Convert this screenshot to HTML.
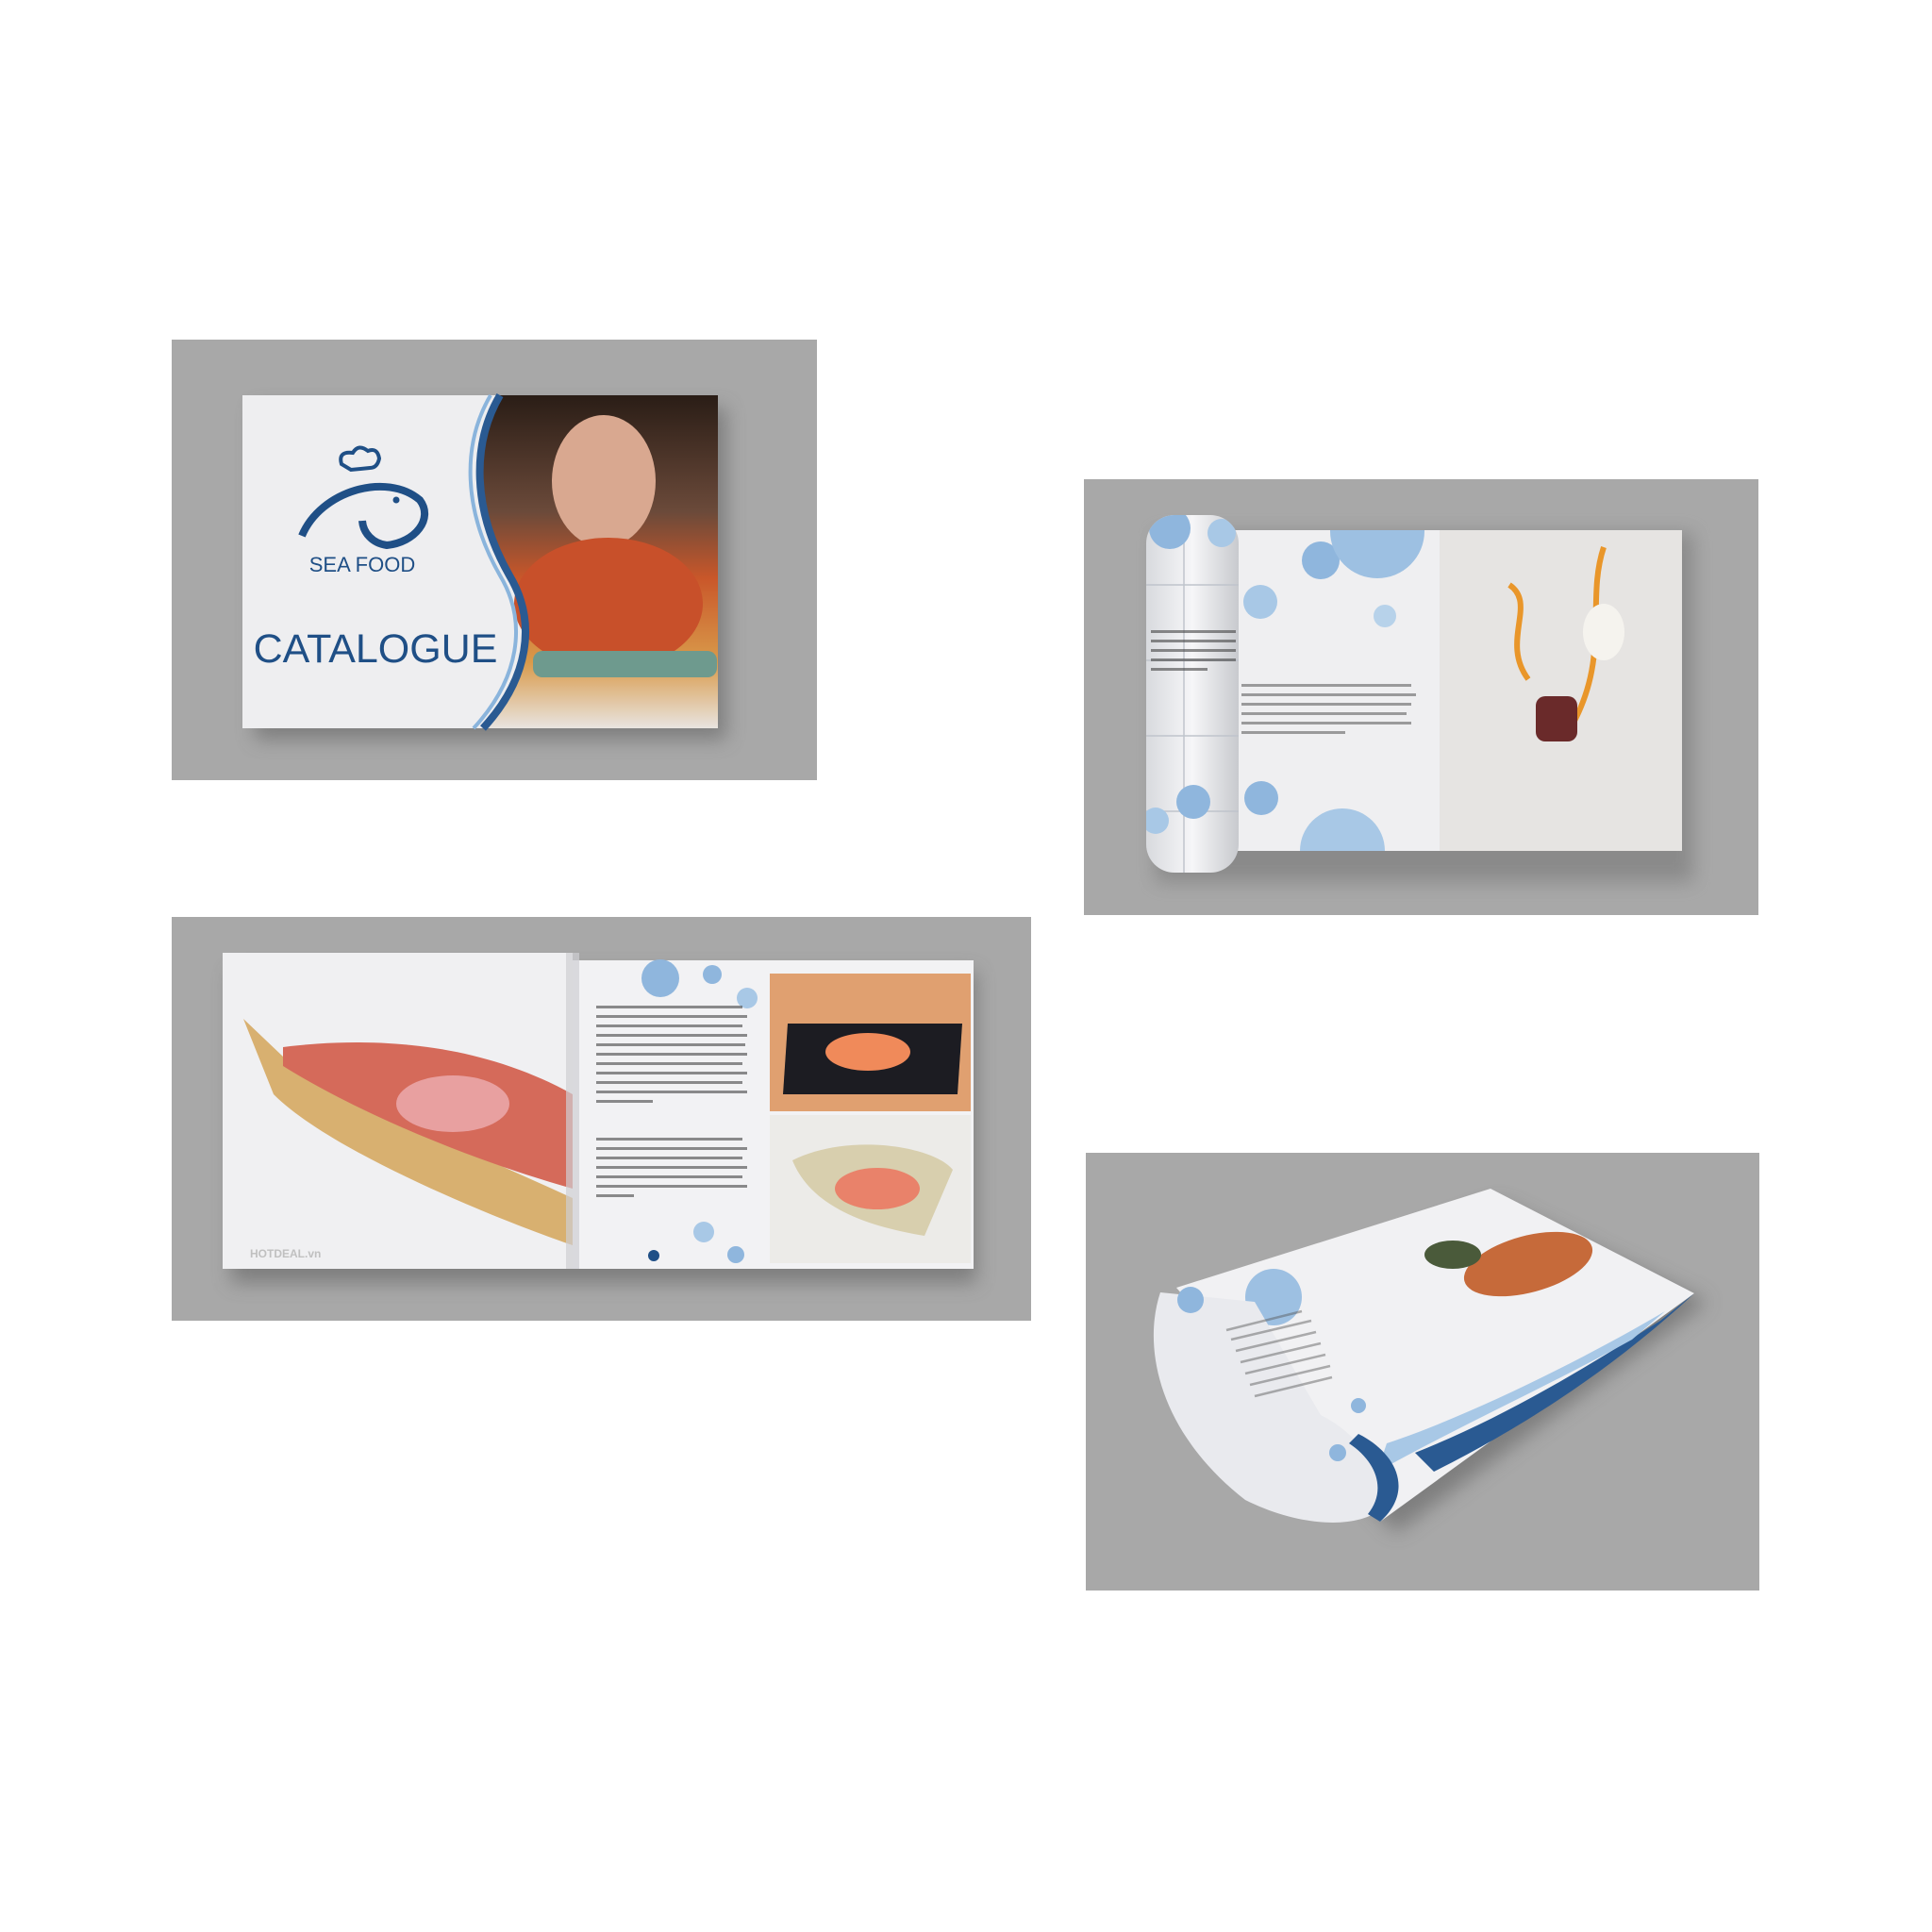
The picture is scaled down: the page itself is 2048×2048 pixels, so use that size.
<!DOCTYPE html>
<html><head><style>
html,body{margin:0;padding:0;background:#fff;}
svg{display:block;font-family:"Liberation Sans",sans-serif;}
</style></head><body>
<svg width="2048" height="2048" viewBox="0 0 2048 2048" xmlns="http://www.w3.org/2000/svg">
<defs>
<filter id="sh" x="-10%" y="-10%" width="130%" height="140%"><feGaussianBlur stdDeviation="10"/></filter>
<linearGradient id="food" x1="0" y1="0" x2="0" y2="1"><stop offset="0" stop-color="#2a1d16"/><stop offset="0.35" stop-color="#6b4a3a"/><stop offset="0.55" stop-color="#c9572a"/><stop offset="0.8" stop-color="#d99a4a"/><stop offset="1" stop-color="#e8e4e0"/></linearGradient>
<linearGradient id="roll" x1="0" y1="0" x2="1" y2="0"><stop offset="0" stop-color="#d8dade"/><stop offset="0.5" stop-color="#f6f6f8"/><stop offset="1" stop-color="#c8cace"/></linearGradient>
<clipPath id="p2"><rect x="1300" y="562" width="226" height="340"/></clipPath>
<clipPath id="p2r"><rect x="1215" y="546" width="98" height="379" rx="30"/></clipPath>
</defs>
<rect width="2048" height="2048" fill="#fff"/>

<!-- Panel 1 -->
<rect x="182" y="360" width="684" height="467" fill="#a8a8a8"/>
<rect x="270" y="432" width="500" height="352" fill="#555" filter="url(#sh)" opacity="0.5"/>
<rect x="257" y="419" width="504" height="353" fill="#eeeef0"/>
<path d="M530 419 L761 419 L761 772 L512 772 C560 720 570 660 540 610 C500 540 500 470 530 419Z" fill="url(#food)"/>
<ellipse cx="640" cy="510" rx="55" ry="70" fill="#d9a890"/>
<ellipse cx="645" cy="640" rx="100" ry="70" fill="#c8502a"/>
<rect x="565" y="690" width="195" height="28" rx="10" fill="#6e9a8e"/>
<path d="M530 419 C500 470 500 540 540 610 C570 660 560 720 512 772" fill="none" stroke="#2a5a92" stroke-width="8"/>
<path d="M520 419 C490 470 490 540 530 610 C560 660 550 720 502 772" fill="none" stroke="#8ab4dc" stroke-width="4"/>
<path d="M362 492 q-4 -14 12 -12 q6 -10 16 -2 q10 -4 12 8 q-2 10 -10 10 l-20 2 z" fill="none" stroke="#1f4f86" stroke-width="4"/>
<path d="M320 568 C340 520 410 500 445 530 C460 550 440 575 410 578 C395 576 385 565 384 552" fill="none" stroke="#1f4f86" stroke-width="8"/>
<circle cx="420" cy="530" r="3.5" fill="#1f4f86"/>
<text x="384" y="606" font-size="22" fill="#1f4f86" text-anchor="middle">SEA FOOD</text>
<text x="398" y="702" font-size="43" fill="#1f4f86" text-anchor="middle">CATALOGUE</text>

<!-- Panel 2 -->
<rect x="1149" y="508" width="715" height="462" fill="#a8a8a8"/>
<rect x="1225" y="565" width="570" height="370" fill="#666" filter="url(#sh)" opacity="0.45"/>
<rect x="1300" y="562" width="483" height="340" fill="#efeff1"/>
<rect x="1526" y="562" width="257" height="340" fill="#e6e4e2"/>
<g clip-path="url(#p2)">
<circle cx="1400" cy="594" r="20" fill="#8fb6dd"/><circle cx="1460" cy="563" r="50" fill="#9dc0e2"/>
<circle cx="1336" cy="638" r="18" fill="#a8c8e6"/><circle cx="1468" cy="653" r="12" fill="#b7d2ea"/>
<circle cx="1337" cy="846" r="18" fill="#8fb6dd"/><circle cx="1423" cy="902" r="45" fill="#a8c8e6"/>
</g>
<g fill="#555" opacity="0.55"><rect x="1316" y="725" width="180" height="3"/><rect x="1316" y="735" width="185" height="3"/><rect x="1316" y="745" width="180" height="3"/><rect x="1316" y="755" width="175" height="3"/><rect x="1316" y="765" width="180" height="3"/><rect x="1316" y="775" width="110" height="3"/></g>
<path d="M1600 620 c30 20 -10 60 20 100 M1700 580 c-20 60 10 120 -40 200" stroke="#e9962a" stroke-width="6" fill="none"/>
<ellipse cx="1700" cy="670" rx="22" ry="30" fill="#f5f3ee"/>
<rect x="1628" y="738" width="44" height="48" rx="10" fill="#6a2a2a"/>
<rect x="1215" y="546" width="98" height="379" rx="30" fill="url(#roll)"/>
<g clip-path="url(#p2r)">
<g stroke="#bfc4cc" stroke-width="1.5"><line x1="1215" y1="620" x2="1313" y2="620"/><line x1="1215" y1="700" x2="1313" y2="700"/><line x1="1215" y1="780" x2="1313" y2="780"/><line x1="1215" y1="860" x2="1313" y2="860"/><line x1="1255" y1="546" x2="1255" y2="925"/></g>
<circle cx="1240" cy="560" r="22" fill="#8fb6dd"/><circle cx="1295" cy="565" r="15" fill="#a8c8e6"/><circle cx="1265" cy="850" r="18" fill="#8fb6dd"/><circle cx="1225" cy="870" r="14" fill="#a8c8e6"/>
</g>
<g fill="#444" opacity="0.6"><rect x="1220" y="668" width="90" height="3"/><rect x="1220" y="678" width="90" height="3"/><rect x="1220" y="688" width="90" height="3"/><rect x="1220" y="698" width="90" height="3"/><rect x="1220" y="708" width="60" height="3"/></g>

<!-- Panel 3 -->
<rect x="182" y="972" width="911" height="428" fill="#a8a8a8"/>
<rect x="245" y="1030" width="790" height="330" fill="#555" filter="url(#sh)" opacity="0.5"/>
<rect x="236" y="1010" width="371" height="335" fill="#f0f0f2"/>
<rect x="607" y="1018" width="425" height="327" fill="#f2f2f4"/>
<path d="M258 1080 L300 1120 C400 1180 520 1230 607 1270 L607 1320 C520 1290 350 1220 290 1160 Z" fill="#d8b070"/>
<path d="M300 1110 C380 1100 500 1100 607 1160 L607 1260 C500 1230 380 1180 300 1130Z" fill="#d56a5a"/>
<ellipse cx="480" cy="1170" rx="60" ry="30" fill="#e8a0a0"/>
<rect x="600" y="1010" width="14" height="335" fill="#cfcfd3" opacity="0.7"/>
<circle cx="700" cy="1037" r="20" fill="#8fb6dd"/><circle cx="755" cy="1033" r="10" fill="#8fb6dd"/><circle cx="792" cy="1058" r="11" fill="#a8c8e6"/>
<circle cx="746" cy="1306" r="11" fill="#a8c8e6"/><circle cx="780" cy="1330" r="9" fill="#8fb6dd"/><circle cx="693" cy="1331" r="6" fill="#1f4f86"/>
<g fill="#444" opacity="0.6">
<rect x="632" y="1066" width="155" height="3"/><rect x="632" y="1076" width="160" height="3"/><rect x="632" y="1086" width="155" height="3"/><rect x="632" y="1096" width="160" height="3"/><rect x="632" y="1106" width="158" height="3"/><rect x="632" y="1116" width="160" height="3"/><rect x="632" y="1126" width="155" height="3"/><rect x="632" y="1136" width="160" height="3"/><rect x="632" y="1146" width="155" height="3"/><rect x="632" y="1156" width="160" height="3"/><rect x="632" y="1166" width="60" height="3"/>
<rect x="632" y="1206" width="155" height="3"/><rect x="632" y="1216" width="160" height="3"/><rect x="632" y="1226" width="155" height="3"/><rect x="632" y="1236" width="160" height="3"/><rect x="632" y="1246" width="155" height="3"/><rect x="632" y="1256" width="160" height="3"/><rect x="632" y="1266" width="40" height="3"/></g>
<rect x="816" y="1032" width="213" height="146" fill="#e0a070"/>
<path d="M835 1085 L1020 1085 L1015 1160 L830 1160Z" fill="#1c1c22"/>
<ellipse cx="920" cy="1115" rx="45" ry="20" fill="#f08a5a"/>
<rect x="816" y="1182" width="213" height="157" fill="#ecebe8"/>
<path d="M840 1230 C900 1200 990 1215 1010 1240 L980 1310 C920 1300 860 1280 840 1230Z" fill="#d8cfae"/>
<ellipse cx="930" cy="1260" rx="45" ry="22" fill="#e9826a"/>
<text x="265" y="1333" font-size="12" fill="#c0c0c0" font-weight="bold">HOTDEAL.vn</text>

<!-- Panel 4 -->
<rect x="1151" y="1222" width="714" height="464" fill="#a8a8a8"/>
<path d="M1260 1395 L1590 1275 L1810 1380 L1480 1625 Z" fill="#555" filter="url(#sh)" opacity="0.5"/>
<path d="M1247 1365 L1580 1260 L1796 1371 L1463 1613 Z" fill="#f1f1f3"/>
<path d="M1520 1560 C1600 1520 1700 1460 1796 1371 L1760 1400 C1680 1450 1600 1500 1500 1540Z" fill="#2a5a92"/>
<path d="M1470 1530 C1560 1500 1680 1440 1765 1390 L1730 1420 C1640 1470 1550 1510 1460 1560Z" fill="#a8c8e6"/>
<circle cx="1350" cy="1375" r="30" fill="#9dc0e2"/>
<ellipse cx="1620" cy="1340" rx="70" ry="30" fill="#c66a3a" transform="rotate(-15 1620 1340)"/>
<ellipse cx="1540" cy="1330" rx="30" ry="15" fill="#4a5a3a"/>
<path d="M1230 1370 C1210 1430 1230 1520 1320 1590 C1380 1620 1440 1620 1463 1600 C1470 1560 1440 1520 1400 1500 L1330 1380 Z" fill="#e9eaee"/>
<path d="M1440 1520 C1480 1540 1500 1580 1463 1613 L1450 1605 C1470 1580 1460 1550 1430 1530Z" fill="#2a5a92"/>
<circle cx="1262" cy="1378" r="14" fill="#8fb6dd"/><circle cx="1440" cy="1490" r="8" fill="#8fb6dd"/><circle cx="1418" cy="1540" r="9" fill="#8fb6dd"/>
<g stroke="#555" stroke-width="2.5" opacity="0.45"><line x1="1300" y1="1410" x2="1380" y2="1390"/><line x1="1305" y1="1420" x2="1390" y2="1400"/><line x1="1310" y1="1432" x2="1395" y2="1412"/><line x1="1315" y1="1444" x2="1400" y2="1424"/><line x1="1320" y1="1456" x2="1405" y2="1436"/><line x1="1325" y1="1468" x2="1410" y2="1448"/><line x1="1330" y1="1480" x2="1412" y2="1460"/></g>
</svg>
</body></html>
